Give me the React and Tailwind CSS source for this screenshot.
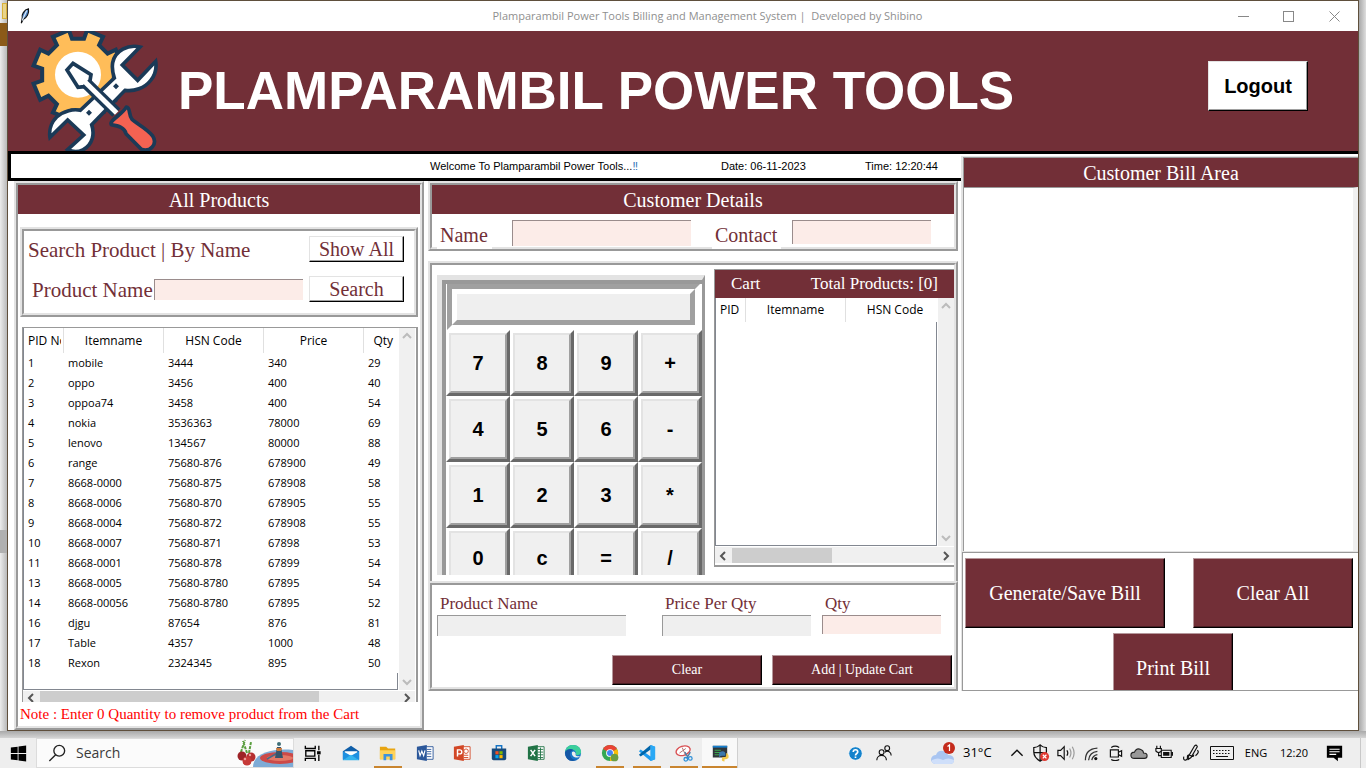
import React from "react";

const GOUDY = "font-['Goudy_Old_Style','Liberation_Serif',serif]";
const ARIAL = "font-['Liberation_Sans',Arial,sans-serif]";

const products = [
  ["1", "mobile", "3444", "340", "29"],
  ["2", "oppo", "3456", "400", "40"],
  ["3", "oppoa74", "3458", "400", "54"],
  ["4", "nokia", "3536363", "78000", "69"],
  ["5", "lenovo", "134567", "80000", "88"],
  ["6", "range", "75680-876", "678900", "49"],
  ["7", "8668-0000", "75680-875", "678908", "58"],
  ["8", "8668-0006", "75680-870", "678905", "55"],
  ["9", "8668-0004", "75680-872", "678908", "55"],
  ["10", "8668-0007", "75680-871", "67898", "53"],
  ["11", "8668-0001", "75680-878", "67899", "54"],
  ["13", "8668-0005", "75680-8780", "67895", "54"],
  ["14", "8668-00056", "75680-8780", "67895", "52"],
  ["16", "djgu", "87654", "876", "81"],
  ["17", "Table", "4357", "1000", "48"],
  ["18", "Rexon", "2324345", "895", "50"],
];

const calcKeys = ["7", "8", "9", "+", "4", "5", "6", "-", "1", "2", "3", "*", "0", "c", "=", "/"];

/* Raised frame with a two-tone edge */
function Ridge({ children, className = "", inner = "", open = false }) {
  return (
    <div
      className={`border-2 border-t-[#e3e3e3] border-l-[#e3e3e3] border-r-[#999999] border-b-[#999999] ${open ? "border-b-0" : ""} ${className}`}
    >
      <div
        className={`border-2 border-t-[#999999] border-l-[#999999] border-r-[#e3e3e3] border-b-[#e3e3e3] ${open ? "border-b-0" : ""} ${inner}`}
      >
        {children}
      </div>
    </div>
  );
}

function PanelTitle({ children }) {
  return (
    <h2 className={`flex h-[29px] items-center justify-center bg-[#722f37] text-xl leading-6 text-white ${GOUDY}`}>
      {children}
    </h2>
  );
}

function MaroonButton({ children, className }) {
  return (
    <button
      type="button"
      className={`border border-t-[#b5979b] border-l-[#b5979b] border-r-black border-b-black bg-[#722f37] text-white shadow-[inset_-1px_-1px_0_#4a1e24] ${GOUDY} ${className}`}
    >
      {children}
    </button>
  );
}

function WhiteButton({ children }) {
  return (
    <button
      type="button"
      className={`block h-[26px] w-[95px] border border-t-[#e3e3e3] border-l-[#e3e3e3] border-r-black border-b-black bg-white text-xl leading-[22px] text-[#722f37] shadow-[inset_-1px_-1px_0_#a0a0a0] ${GOUDY}`}
    >
      {children}
    </button>
  );
}

const PINK_INPUT = "block w-full min-w-0 border-t border-l border-[#9a8c8c] bg-[#fcece8] px-1 text-sm outline-none";
const GRAY_INPUT = "block w-full min-w-0 border-t border-l border-[#999999] bg-[#efefef] px-1 text-sm outline-none";

function Arrow({ dir, color }) {
  const d = {
    up: "M1 7 L5 3 L9 7",
    down: "M1 3 L5 7 L9 3",
    left: "M7 1 L3 5 L7 9",
    right: "M3 1 L7 5 L3 9",
  }[dir];
  return (
    <svg viewBox="0 0 10 10" className="size-[10px] shrink-0" fill="none" stroke={color} strokeWidth="2">
      <path d={d} />
    </svg>
  );
}

function VScroll() {
  return (
    <div className="flex w-4 shrink-0 flex-col items-center justify-between bg-[#f0f0f0] py-[3px]">
      <Arrow dir="up" color="#bcbcbc" />
      <Arrow dir="down" color="#bcbcbc" />
    </div>
  );
}

function HScroll({ thumb, className }) {
  return (
    <div className={`flex gap-1 overflow-hidden bg-[#f0f0f0] px-[3px] ${className}`}>
      <div className="pt-[2px]"><Arrow dir="left" color="#555555" /></div>
      <div className="flex-1"><div className={`h-full bg-[#cdcdcd] ${thumb}`} /></div>
      <div className="pt-[2px]"><Arrow dir="right" color="#555555" /></div>
    </div>
  );
}

function Logo() {
  const cx = 234;
  const cy = 224;
  const pts = [];
  for (let k = 0; k < 8; k++) {
    const a = 22.5 + 45 * k;
    [[-13, 109], [-11, 136], [11, 136], [13, 109]].forEach(([o, r]) => {
      const t = ((a + o) * Math.PI) / 180;
      pts.push(`${(cx + r * Math.cos(t)).toFixed(1)} ${(cy + r * Math.sin(t)).toFixed(1)}`);
    });
  }
  return (
    <svg viewBox="90 93 390 360" className="h-[120px] w-[130px] shrink-0" strokeLinejoin="round" aria-label="Tools logo">
      <path d={`M${pts.join(" L")} Z`} fill="#ffbd59" stroke="#1b3a57" strokeWidth="12" strokeLinejoin="miter" />
      <circle cx={cx} cy={cy} r="69" fill="#fff" />
      <path
        d="M420 141 C385 132 345 152 338 188 C335 206 339 222 343 234 L241 331 C222 326 190 332 170 351 C151 370 147 395 150 412 L203 360 L251 405 L203 449 C235 465 268 446 277 415 C281 400 279 386 275 374 L375 271 C402 275 434 265 453 240 C467 222 470 202 467 184 L413 241 L367 195 Z"
        fill="#fff"
        stroke="#1b3a57"
        strokeWidth="11"
        strokeLinejoin="miter"
      />
      <path d="M348 250 l9 9 -9 9 -9 -9z M267 329 l9 9 -9 9 -9 -9z" fill="#1b3a57" />
      <path d="M256 247 L349 338" stroke="#1b3a57" strokeWidth="35" />
      <path d="M219 190 L273 224 L270 242 L252 260 L234 262 L201 210 Z" fill="#fff" stroke="#1b3a57" strokeWidth="11" strokeLinejoin="miter" />
      <path d="M253 244 L350 339" stroke="#fff" strokeWidth="15" />
      <path
        d="M379 321 C392 322 385 345 396 358 C408 371 436 382 458 408 C474 432 450 458 424 448 L378 401 C374 383 356 378 334 374 C326 362 368 343 379 321 Z"
        fill="#f46252"
        stroke="#1b3a57"
        strokeWidth="11"
      />
    </svg>
  );
}

function TitleBar() {
  return (
    <div className="flex h-[30px] shrink-0 items-center bg-white font-['Segoe_UI','Open_Sans',sans-serif]">
      <svg viewBox="0 0 20 20" className="ml-[7px] size-[18px] shrink-0">
        <path d="M7 18 L8 12 C7 9 10 3 15 2 C16 7 13 12 9 14 Z" fill="#4f86c6" stroke="#111" strokeWidth="1.2" />
        <path d="M13 4 L8 15" stroke="#d8e8fa" strokeWidth="1.4" />
      </svg>
      <p className="flex-1 pl-[161px] text-center text-[11px] whitespace-pre text-[#8f8f8f]">
        Plamparambil Power Tools Billing and Management System |  Developed by Shibino
      </p>
      <div className="flex text-[#888888]">
        <button type="button" aria-label="Minimize" className="flex h-7 w-[45px] items-center justify-center">
          <svg viewBox="0 0 11 11" className="size-[11px]" stroke="currentColor"><path d="M0 5.5 H11" /></svg>
        </button>
        <button type="button" aria-label="Maximize" className="flex h-7 w-[45px] items-center justify-center">
          <svg viewBox="0 0 11 11" className="size-[11px]" stroke="currentColor" fill="none"><rect x=".5" y=".5" width="10" height="10" /></svg>
        </button>
        <button type="button" aria-label="Close" className="flex h-7 w-[47px] items-center justify-center">
          <svg viewBox="0 0 11 11" className="size-[11px]" stroke="currentColor"><path d="M.5 .5 L10.5 10.5 M10.5 .5 L.5 10.5" /></svg>
        </button>
      </div>
    </div>
  );
}

function Header() {
  return (
    <header className="flex h-[120px] shrink-0 items-center bg-[#722f37] pl-[22px]">
      <Logo />
      <h1 className={`flex-1 pb-[2px] pl-[18px] text-[53px] leading-none font-bold whitespace-nowrap text-white ${ARIAL}`}>
        PLAMPARAMBIL POWER TOOLS
      </h1>
      <button
        type="button"
        className={`mr-[50px] mb-[10px] h-[50px] w-[100px] border border-t-[#e3e3e3] border-l-[#e3e3e3] border-r-black border-b-black bg-white text-xl font-bold text-black shadow-[inset_-1px_-1px_0_#a0a0a0] ${ARIAL}`}
      >
        Logout
      </button>
    </header>
  );
}

const TH = "overflow-hidden border-r border-[#e0e0e0] p-0 text-center text-xs font-normal whitespace-nowrap";

function ProductsPanel() {
  return (
    <Ridge>
      <PanelTitle>All Products</PanelTitle>
      <Ridge className="mx-[2px] mt-[13px]" inner="h-[86px]">
        <form className={`flex flex-col gap-[14px] pt-[5px] pr-[10px] text-[21px] leading-[26px] text-[#722f37] ${GOUDY}`}>
          <div className="flex h-[26px] items-center pl-1">
            <p className="flex-1 pt-[2px] whitespace-nowrap">Search Product | By Name</p>
            <WhiteButton>Show All</WhiteButton>
          </div>
          <div className="flex h-[26px] items-center pl-2">
            <label htmlFor="search-name" className="w-[122px] pt-[2px] whitespace-nowrap">Product Name</label>
            <div className="min-w-0 flex-1"><input id="search-name" type="text" className={`h-[21px] ${PINK_INPUT}`} /></div>
            <div className="ml-[6px]"><WhiteButton>Search</WhiteButton></div>
          </div>
        </form>
      </Ridge>
      <div className="mt-[10px] mr-[2px] ml-1 border-t border-r-2 border-l border-[#999999] pr-px font-['Segoe_UI','Open_Sans',sans-serif] text-black">
        <div className="flex">
          <div className="flex min-w-0 flex-1 flex-col border-l border-[#828790]">
            <table className="w-full table-fixed border-separate border-spacing-0 text-[11px]">
              <colgroup>
                <col className="w-10" />
                <col className="w-[100px]" />
                <col className="w-[100px]" />
                <col className="w-[100px]" />
                <col />
              </colgroup>
              <thead>
                <tr className="h-[25px]">
                  <th className={TH}><div className="mr-[2px] overflow-hidden pl-1 text-left">PID No</div></th>
                  <th className={TH}>Itemname</th>
                  <th className={TH}>HSN Code</th>
                  <th className={TH}>Price</th>
                  <th className="p-0 pr-[6px] text-right text-xs font-normal">Qty</th>
                </tr>
              </thead>
              <tbody>
                {products.map((row) => (
                  <tr key={row[0]} className="h-5">
                    {row.map((cell, i) => (
                      <td key={i} className="p-0 pl-1 leading-5 whitespace-nowrap">{cell}</td>
                    ))}
                  </tr>
                ))}
              </tbody>
            </table>
            <div className="mr-px h-[17px] border-r border-b border-[#828790]" />
          </div>
          <VScroll />
        </div>
        <HScroll className="mt-px h-[11px]" thumb="w-[78%]" />
      </div>
      <p className={`h-6 pl-[2px] text-[15px] leading-6 whitespace-nowrap text-[#ff0000] ${GOUDY}`}>
        Note : Enter 0 Quantity to remove product from the Cart
      </p>
    </Ridge>
  );
}

function CustomerDetails() {
  return (
    <Ridge>
      <PanelTitle>Customer Details</PanelTitle>
      <form className={`flex h-[33px] items-start pr-[23px] pl-[5px] text-xl text-[#722f37] ${GOUDY}`}>
        <label htmlFor="cust-name" className="relative mr-5 h-[35px] w-[55px] bg-white pt-[7px] pl-[3px] leading-7">Name</label>
        <div className="mt-[6px] flex-[179]"><input id="cust-name" type="text" className={`h-[26px] ${PINK_INPUT}`} /></div>
        <label htmlFor="cust-contact" className="relative mr-[11px] ml-[21px] h-[35px] w-[69px] bg-white pt-[7px] pl-[3px] leading-7">Contact</label>
        <div className="mt-[6px] flex-[139]"><input id="cust-contact" type="text" className={`h-6 ${PINK_INPUT}`} /></div>
      </form>
    </Ridge>
  );
}

function Calculator() {
  return (
    <div className="h-[300px] w-[268px] shrink-0 overflow-hidden border-t-[5px] border-r-[3px] border-l-[5px] border-t-[#e3e3e3] border-r-[#999999] border-l-[#e3e3e3]">
      <div className="border-t-4 border-l-4 border-[#999999]">
        <div className="mr-[2px] ml-px">
          <div className="border-[5px] border-t-[#a0a0a0] border-r-white border-b-white border-l-[#a0a0a0]">
            <input
              type="text"
              aria-label="Calculator display"
              className="block h-9 w-full border-[5px] border-t-white border-r-[#a0a0a0] border-b-[#a0a0a0] border-l-white bg-[#efefef] text-right outline-none"
            />
          </div>
        </div>
        <div className="grid grid-cols-4 grid-rows-[66px_66px_66px_60px]">
          {calcKeys.map((k) => (
            <button
              key={k}
              type="button"
              className={`flex border-[3px] border-t-white border-r-[#696969] border-b-[#696969] border-l-white text-xl font-bold text-black ${ARIAL}`}
            >
              <span className="flex h-full w-full items-center justify-center border-2 border-t-[#e3e3e3] border-r-[#a0a0a0] border-b-[#a0a0a0] border-l-[#e3e3e3] bg-[#f0f0f0]">
                {k}
              </span>
            </button>
          ))}
        </div>
      </div>
    </div>
  );
}

function Cart() {
  return (
    <div className="mb-2 flex min-w-0 flex-1 flex-col border-t border-b-2 border-l border-[#999999]">
      <div className={`flex h-7 items-center justify-between bg-[#722f37] pr-4 pl-4 text-[17px] text-white ${GOUDY}`}>
        <h3>Cart</h3>
        <p>Total Products: [0]</p>
      </div>
      <div className="flex flex-1">
        <div className="flex min-w-0 flex-1 flex-col border-l border-[#828790] font-['Segoe_UI','Open_Sans',sans-serif] text-black">
          <table className="w-full table-fixed border-separate border-spacing-0">
            <colgroup>
              <col className="w-[30px]" />
              <col className="w-[100px]" />
              <col />
            </colgroup>
            <thead>
              <tr className="h-6">
                <th className={TH}><div className="overflow-hidden pl-1 text-left">PID</div></th>
                <th className={TH}>Itemname</th>
                <th className="p-0 pl-[6px] text-center text-xs font-normal">HSN Code</th>
              </tr>
            </thead>
          </table>
          <div className="mr-px flex-1 border-r border-b border-[#828790]" />
        </div>
        <VScroll />
      </div>
      <HScroll className="mt-px mb-[2px] h-4 items-center" thumb="h-[15px]! w-[49%]" />
    </div>
  );
}

function Field({ id, label, className, input }) {
  return (
    <div className={`min-w-0 ${className}`}>
      <label htmlFor={id} className="block h-[23px] pl-[3px] leading-6 whitespace-nowrap">{label}</label>
      <input id={id} type="text" className={input} />
    </div>
  );
}

function CartForm() {
  return (
    <Ridge>
      <form className={`text-[17px] text-[#722f37] ${GOUDY}`}>
        <div className="flex h-[70px] items-start pt-[7px] pr-[13px] pl-[5px]">
          <Field id="p-name" label="Product Name" className="mr-9 flex-[189]" input={`h-[21px] ${GRAY_INPUT}`} />
          <Field id="p-price" label="Price Per Qty" className="mr-[11px] flex-[149]" input={`h-[21px] ${GRAY_INPUT}`} />
          <Field id="p-qty" label="Qty" className="flex-[119]" input={`h-[19px] ${PINK_INPUT}`} />
        </div>
        <div className="flex justify-end gap-[10px] pr-[2px] pb-[2px]">
          <MaroonButton className="h-[30px] w-[150px] text-sm">Clear</MaroonButton>
          <MaroonButton className="h-[30px] w-[180px] text-sm">Add | Update Cart</MaroonButton>
        </div>
      </form>
    </Ridge>
  );
}

function BillArea() {
  return (
    <section className="mt-[2px]">
      <div className="border-t border-l-2 border-[#e3e3e3]">
        <div className="border-t border-l border-[#999999]">
          <PanelTitle>Customer Bill Area</PanelTitle>
          <textarea
            aria-label="Customer bill"
            className="block h-[364px] w-full resize-none border-t border-r-[5px] border-t-[#999999] border-r-[#f0f0f0] bg-white outline-none"
          />
        </div>
      </div>
      <div className="border-t border-l border-[#e3e3e3]">
        <div className="border-t border-b border-l border-[#999999]">
          <div className="flex justify-between pt-[5px] pr-[5px] pl-[2px]">
            <MaroonButton className="h-[70px] w-[200px] text-xl">Generate/Save Bill</MaroonButton>
            <MaroonButton className="h-[70px] w-40 text-xl">Clear All</MaroonButton>
          </div>
          <div className="mt-[5px] flex h-[57px] justify-center overflow-hidden pl-[25px]">
            <MaroonButton className="h-[70px] w-[120px] text-xl">Print Bill</MaroonButton>
          </div>
        </div>
      </div>
    </section>
  );
}

function Ico({ children, className = "size-[18px]" }) {
  return <svg viewBox="0 0 20 20" className={`shrink-0 ${className}`} fill="none">{children}</svg>;
}

const apps = [
  { name: "Mail", art: <><path d="M1 8 L10 2 L19 8 V17 H1Z" fill="#0f5ea8" /><path d="M3 8 H17 V12 L10 15 L3 12Z" fill="#fff" /><path d="M1 8 L10 13 L1 18Z" fill="#1e90e0" /><path d="M19 8 L10 13 L19 18Z" fill="#1e90e0" /><path d="M1 18 L10 12 L19 18Z" fill="#35b4ee" /></> },
  { name: "File Explorer", on: true, art: <><path d="M1 3 H8 L10 5 H18 V17 H1Z" fill="#e8a512" /><path d="M1 7 H18 V17 H1Z" fill="#ffd35a" /><path d="M5 18 V11 H15 V18 H12 V14 H8 V18Z" fill="#3f93dd" /></> },
  { name: "Word", art: <><path d="M10 3 H19 V17 H10Z" fill="#fff" stroke="#2b579a" /><path d="M12 6 H17 M12 8.500 H17 M12 11 H17 M12 14 H17" stroke="#2b579a" /><path d="M1 3 L12 1 V19 L1 17Z" fill="#2b579a" /><path d="M3 7 L4.500 13 L6.500 8 L8.500 13 L10 7" stroke="#fff" strokeWidth="1.300" /></> },
  { name: "PowerPoint", art: <><path d="M10 3 H19 V17 H10Z" fill="#fff" stroke="#d24726" /><circle cx="14.500" cy="8" r="2.500" stroke="#d24726" /><path d="M12 12.500 H17 M12 15 H17" stroke="#d24726" /><path d="M1 3 L12 1 V19 L1 17Z" fill="#d24726" /><path d="M5 14 V6.500 H7.500 A2.200 2.200 0 0 1 7.500 11 H5" stroke="#fff" strokeWidth="1.600" /></> },
  { name: "Microsoft Store", art: <><path d="M7 6 V2 H13 V6" stroke="#1674c5" strokeWidth="1.600" /><path d="M2 5 H18 V16 Q18 18 16 18 H4 Q2 18 2 16Z" fill="#174a7c" /><path d="M6 8 H9.500 V11.500 H6Z" fill="#f25022" /><path d="M10.500 8 H14 V11.500 H10.500Z" fill="#7fba00" /><path d="M6 12.300 H9.500 V15.800 H6Z" fill="#00a4ef" /><path d="M10.500 12.300 H14 V15.800 H10.500Z" fill="#ffb900" /></> },
  { name: "Excel", art: <><path d="M10 3 H19 V17 H10Z" fill="#fff" stroke="#217346" /><path d="M12 6 H18 M12 9 H18 M12 12 H18 M12 15 H18 M15 4 V17" stroke="#217346" /><path d="M1 3 L12 1 V19 L1 17Z" fill="#217346" /><path d="M4 6.500 L9 13.500 M9 6.500 L4 13.500" stroke="#fff" strokeWidth="1.700" /></> },
  { name: "Edge", art: <><circle cx="10" cy="10" r="9" fill="#1b76c9" /><path d="M1.200 9 C2 3 6 1 10 1 C16 1 19 5 19 9 C19 12 16 13 13 12 C14 9 12 6.500 9 6.500 C5 6.500 2 8 1.200 9Z" fill="#3ccf9b" /><path d="M1.200 9 C3 5 8 4.500 11 7 C8 6.800 6 10 7 13 C8 16 11 18 14 17.500 C8 21 1 17 1.200 9Z" fill="#1557a5" /><path d="M9 9 C8 12 10 14.500 13 15 C15 15.200 17 14.500 18 13.500 C15 13.800 12 13 13 11 C13 8.500 10 7.500 9 9Z" fill="#eeeeee" /></> },
  { name: "Chrome", on: true, art: <><circle cx="10" cy="10" r="9" fill="#34a853" /><path d="M10 10 L2.200 5.500 A9 9 0 0 1 17.800 5.500Z" fill="#ea4335" /><path d="M10 10 L17.800 5.500 A9 9 0 0 1 10 19Z" fill="#fbbc05" /><circle cx="10" cy="10" r="4.300" fill="#fff" /><circle cx="10" cy="10" r="3.300" fill="#4285f4" /><circle cx="15" cy="15" r="4.300" fill="#6b9e43" /></> },
  { name: "Visual Studio Code", on: true, art: <><path d="M14 1 L19 3 V17 L14 19 L1 8 L3 6 L14 14Z" fill="#1f9cf0" /><path d="M14 1 L1 12 L3 14 L14 6Z" fill="#0065a9" /><path d="M14 1 L19 3 V17 L14 19Z" fill="#2aa8f5" /></> },
  { name: "Snipping Tool", on: true, art: <><ellipse cx="9" cy="7.500" rx="8" ry="5" transform="rotate(-18 9 7.500)" fill="#fff" stroke="#d94f52" strokeWidth="1.500" /><path d="M5 10 L12 5 M8 4 L12 13" stroke="#a66" /><path d="M11 9 L15 16 M17 9 L13 16" stroke="#4a7fa8" strokeWidth="1.500" /><circle cx="12" cy="17" r="2" stroke="#2c8fd8" strokeWidth="1.400" /><circle cx="17" cy="16" r="2" stroke="#2c8fd8" strokeWidth="1.400" /></> },
];

function Taskbar() {
  return (
    <nav className="flex h-[30px] shrink-0 items-stretch bg-[#eeeeee] font-['Segoe_UI','Open_Sans',sans-serif] text-black">
      <button type="button" aria-label="Start" className="flex w-9 items-center justify-center">
        <Ico className="size-[17px]"><path d="M1 3 L9 2 V9.500 H1Z M10 1.800 L19 .5 V9.500 H10Z M1 10.500 H9 V18 L1 17Z M10 10.500 H19 V19.500 L10 18.200Z" fill="#000" /></Ico>
      </button>
      <div className="flex w-[258px] items-center border border-[#dcdcdc] bg-[#fbfbfb] pl-[11px]">
        <Ico><path d="M8.500 12 L1.500 19" stroke="#222" strokeWidth="1.500" /><circle cx="12.500" cy="7.500" r="6" stroke="#222" strokeWidth="1.500" /></Ico>
        <input type="text" aria-label="Search" placeholder="Search" className="min-w-0 flex-1 bg-transparent pl-[10px] text-sm outline-none placeholder:text-[#3a3a3a]" />
        <svg viewBox="0 0 56 28" className="h-7 w-14 shrink-0" fill="none">
          <path d="M16 28 C16 14 36 9 56 11 V28Z" fill="#7eabd6" />
          <ellipse cx="43" cy="19" rx="20" ry="6" fill="#cc4948" />
          <ellipse cx="43" cy="19" rx="13" ry="3" fill="#e37866" />
          <path d="M30 20 L44 12" stroke="#466a86" strokeWidth="1.500" />
          <path d="M38 19 H46 L44 8 H40Z" fill="#36546b" />
          <path d="M39 9 H45 L44 12 H40Z" fill="#d07a3a" />
          <circle cx="42" cy="5" r="2" fill="#3f6f78" />
          <path d="M4 13 L8 1 M10 14 L6 2 M12 14 L14 3" stroke="#5a9e3f" strokeWidth="2" strokeDasharray="3 1" />
          <circle cx="5" cy="17" r="4.500" fill="#9e2327" />
          <circle cx="14" cy="18" r="4.500" fill="#b52f30" />
          <circle cx="10" cy="22" r="4.500" fill="#c63a38" />
          <circle cx="8" cy="20" r="1.200" fill="#efa09a" />
          <circle cx="13" cy="16" r="1.200" fill="#efa09a" />
        </svg>
      </div>
      <button type="button" aria-label="Task view" className="flex w-[38px] items-center justify-center">
        <Ico><path d="M1.500 2 V5 H12.500 V2 M2 7.500 H12 V13.500 H2Z M1.500 19 V16 H12.500 V19 M16.500 2 V7 M16.500 12 V19" stroke="#000" strokeWidth="1.500" /><path d="M14.500 8 H18.500 V11.500 H14.500Z" fill="#000" /></Ico>
      </button>
      {apps.map((a) => (
        <button key={a.name} type="button" aria-label={a.name} className="flex w-[37px] flex-col items-center">
          <span className="flex flex-1 items-center pt-[2px]"><Ico>{a.art}</Ico></span>
          <span className={`h-[2px] w-7 ${a.on ? "bg-[#c9852f]" : ""}`} />
        </button>
      ))}
      <button type="button" aria-label="Python" className="flex w-9 flex-col items-center border-r border-[#d0d0d0] bg-[#f9f9f9]">
        <span className="flex flex-1 items-center pt-[2px]">
          <Ico>
            <path d="M2 2 H18 V15 H2Z" fill="#30363b" /><path d="M2 2 H18 V4 H2Z" fill="#1680cf" />
            <path d="M4 7 H11 M4 9.500 H13 M4 12 H9" stroke="#3ba84e" strokeWidth="1.200" />
            <path d="M9 15 V11 Q9 8 13 8 Q16 8 16 11 V13 H12 Q10 13 9 15Z" fill="#3c79ad" />
            <path d="M17 10 Q20 11 19.500 15 Q19 17 15 17 V19.500 Q12 19.500 12 17 Q12 14.500 14 14.500 H16 Q17 14 17 10Z" fill="#f2c94c" />
          </Ico>
        </span>
        <span className="h-[2px] w-full bg-[#c9852f]" />
      </button>

      <div className="mr-[5px] ml-auto flex items-center border-r border-[#c8c8c8] pr-[6px]">
        <span className="flex w-[30px] justify-center">
          <Ico className="size-[15px]"><circle cx="10" cy="10" r="9" fill="#1583cc" stroke="#fff" /><path d="M7 8 C7 4 13 4 13 8 C13 10 10 10 10 12.500 M10 14 V16" stroke="#fff" strokeWidth="2.200" /></Ico>
        </span>
        <span className="mr-8 flex w-7 justify-center">
          <Ico className="size-4"><g stroke="#111" strokeWidth="1.400"><circle cx="7" cy="9" r="3" /><path d="M1 19 C1 11 13 11 13 19" /><circle cx="14" cy="4" r="3" /><path d="M11 9 C15 6 19 9 19 13" /></g></Ico>
        </span>
        <span className="flex w-[26px] justify-center">
          <svg viewBox="0 0 26 26" className="size-[26px]" fill="none">
            <path d="M5 24 Q1 23 1 19 Q2 15 6 15 Q8 10 13 11 Q17 11 18 15 Q24 15 24 20 Q24 24 20 24Z" fill="#a9c5f1" />
            <path d="M5 24 Q1 23 2 20 Q8 17 13 20 Q18 17 24 20 Q24 24 20 24Z" fill="#cfdffa" />
            <circle cx="19" cy="8" r="6" fill="#c42b1c" />
            <path d="M17.500 6.500 L19.500 5 V11" stroke="#fff" strokeWidth="1.200" />
          </svg>
        </span>
        <span className="w-[49px] pl-[7px] text-[13px]">31°C</span>
        <span className="flex w-6 justify-center"><Ico className="size-[14px]"><path d="M2 14 L10 6 L18 14" stroke="#111" strokeWidth="2" /></Ico></span>
        <span className="flex w-6 justify-center">
          <Ico><path d="M9 1 Q12 4 16 4 V9 Q16 15 9 19 Q2 15 2 9 V4 Q6 4 9 1Z M9 1 V19 M2 9.500 H16" stroke="#111" strokeWidth="1.400" /><circle cx="14" cy="14" r="5" fill="#e03a32" /><path d="M12 12 L16 16 M16 12 L12 16" stroke="#fff" strokeWidth="1.400" /></Ico>
        </span>
        <span className="flex w-[25px] justify-center">
          <Ico><path d="M1 7 H4 L8 3 V17 L4 13 H1Z" stroke="#111" strokeWidth="1.300" /><path d="M11 7 Q13 10 11 13" stroke="#111" strokeWidth="1.300" /><path d="M14 5 Q17 10 14 15 M17 3 Q21 10 17 17" stroke="#999" strokeWidth="1.300" /></Ico>
        </span>
        <span className="flex w-[26px] justify-center">
          <Ico className="size-4"><path d="M3 19 Q3 5 18 4 M7 19 Q8 9 18 8 M11 19 Q12 13 18 12" stroke="#333" strokeWidth="1.600" /><circle cx="16" cy="17" r="2" fill="#111" /></Ico>
        </span>
        <span className="flex w-[23px] justify-center">
          <Ico className="size-4"><path d="M3 6 H13 V15 H3Z M13 9 L17 7 V14 L13 12 M4 3 Q9 0 14 3 M4 18 Q9 21 14 18" stroke="#111" strokeWidth="1.500" /></Ico>
        </span>
        <span className="flex w-6 justify-center">
          <Ico><path d="M5 16 Q1 16 1 12.500 Q1 9 5 9 Q7 4 12 6 Q15 7 15 10 Q19 10 19 13 Q19 16 16 16Z" fill="#999" stroke="#222" strokeWidth="1.200" /></Ico>
        </span>
        <span className="flex w-[25px] justify-center">
          <Ico><path d="M7 7 H18 V15 H7Z" stroke="#111" strokeWidth="1.200" /><path d="M9 9 H16 V13 H9Z M18 9 H20 V13 H18Z" fill="#111" /><path d="M2 2 V5 M6 2 V5 M1 5 H7 V8 Q4 11 1 8Z M4 10 V13 H7" fill="#eeeeee" stroke="#111" strokeWidth="1.300" /></Ico>
        </span>
        <span className="flex w-[30px] justify-center">
          <Ico><path d="M2 14 Q1 18 4 18 Q7 17 6 14 Q6 11 10 13 Q13 15 13 12 M7 14 L14 2 Q16 0 17 3 L10 15 L7 17Z M17 7 Q20 9 15 13" stroke="#111" strokeWidth="1.300" /></Ico>
        </span>
        <span className="flex w-8 justify-center">
          <svg viewBox="0 0 24 14" className="h-[14px] w-6" fill="none" stroke="#111"><path d="M.5 .5 H23.500 V13.500 H.5Z" /><path d="M3 4.500 H21 M3 7.500 H21" strokeDasharray="1.500 1.500" /><path d="M6 10.500 H18" /></svg>
        </span>
        <span className="w-9 text-center text-[11px]">ENG</span>
        <span className="w-10 text-center text-[11px]">12:20</span>
        <span className="flex w-10 justify-center">
          <Ico className="size-[17px]"><path d="M1 1 H19 V15 H14 V19 L9 15 H1Z" fill="#000" /><path d="M4 5 H16 M4 8 H16 M4 11 H12" stroke="#fff" strokeWidth="1.300" /></Ico>
        </span>
      </div>
    </nav>
  );
}

export default function App() {
  return (
    <div className="flex min-h-screen flex-col bg-[#d2d2d2]">
      <div className="flex flex-1">
        <div className="flex w-[7px] shrink-0 flex-col bg-linear-to-r from-[#ececec] to-[#b9b9b9]">
          <div className="mt-[3px] ml-[2px] h-4 border border-[#d9b13a] bg-[#e8d48c]" />
          <div className="mt-1 h-[23px] bg-[#8b5a18]" />
          <div className="mt-[484px] h-[23px] bg-[#b0b0b0]" />
        </div>
        <div className="flex min-w-0 flex-1 flex-col border border-[#5f4f3c] bg-white">
          <TitleBar />
          <Header />
          <main className="grid grid-cols-[953fr_397fr] items-start border-t-[3px] border-black">
            <div className="min-w-0">
              <div className={`flex h-[27px] items-center border-b-[3px] border-l-[3px] border-black pl-[419px] text-[11px] whitespace-nowrap text-black ${ARIAL}`}>
                <span className="w-[291px]">Welcome To Plamparambil Power Tools...<span className="text-[#2d6fb5]">‼</span></span>
                <span className="w-36">Date: 06-11-2023</span>
                <span>Time: 12:20:44</span>
              </div>
              <div className="grid grid-cols-[410fr_530fr] items-start gap-1 pr-[3px] pl-[6px]">
                <ProductsPanel />
                <div className="min-w-0">
                  <CustomerDetails />
                  <Ridge open className="mt-[10px]" inner="flex gap-[9px] pl-[5px]">
                    <div className="pt-[10px] pb-[6px]"><Calculator /></div>
                    <div className="flex min-w-0 flex-1 flex-col pt-1 pb-[6px]"><Cart /></div>
                  </Ridge>
                  <CartForm />
                </div>
              </div>
            </div>
            <BillArea />
          </main>
        </div>
        <div className="w-[7px] shrink-0 bg-linear-to-r from-[#a8a8a8] to-[#dedede]" />
      </div>
      <div className="h-[7px] shrink-0 bg-linear-to-b from-[#a9a9a9] to-[#d4d4d4]" />
      <Taskbar />
    </div>
  );
}
